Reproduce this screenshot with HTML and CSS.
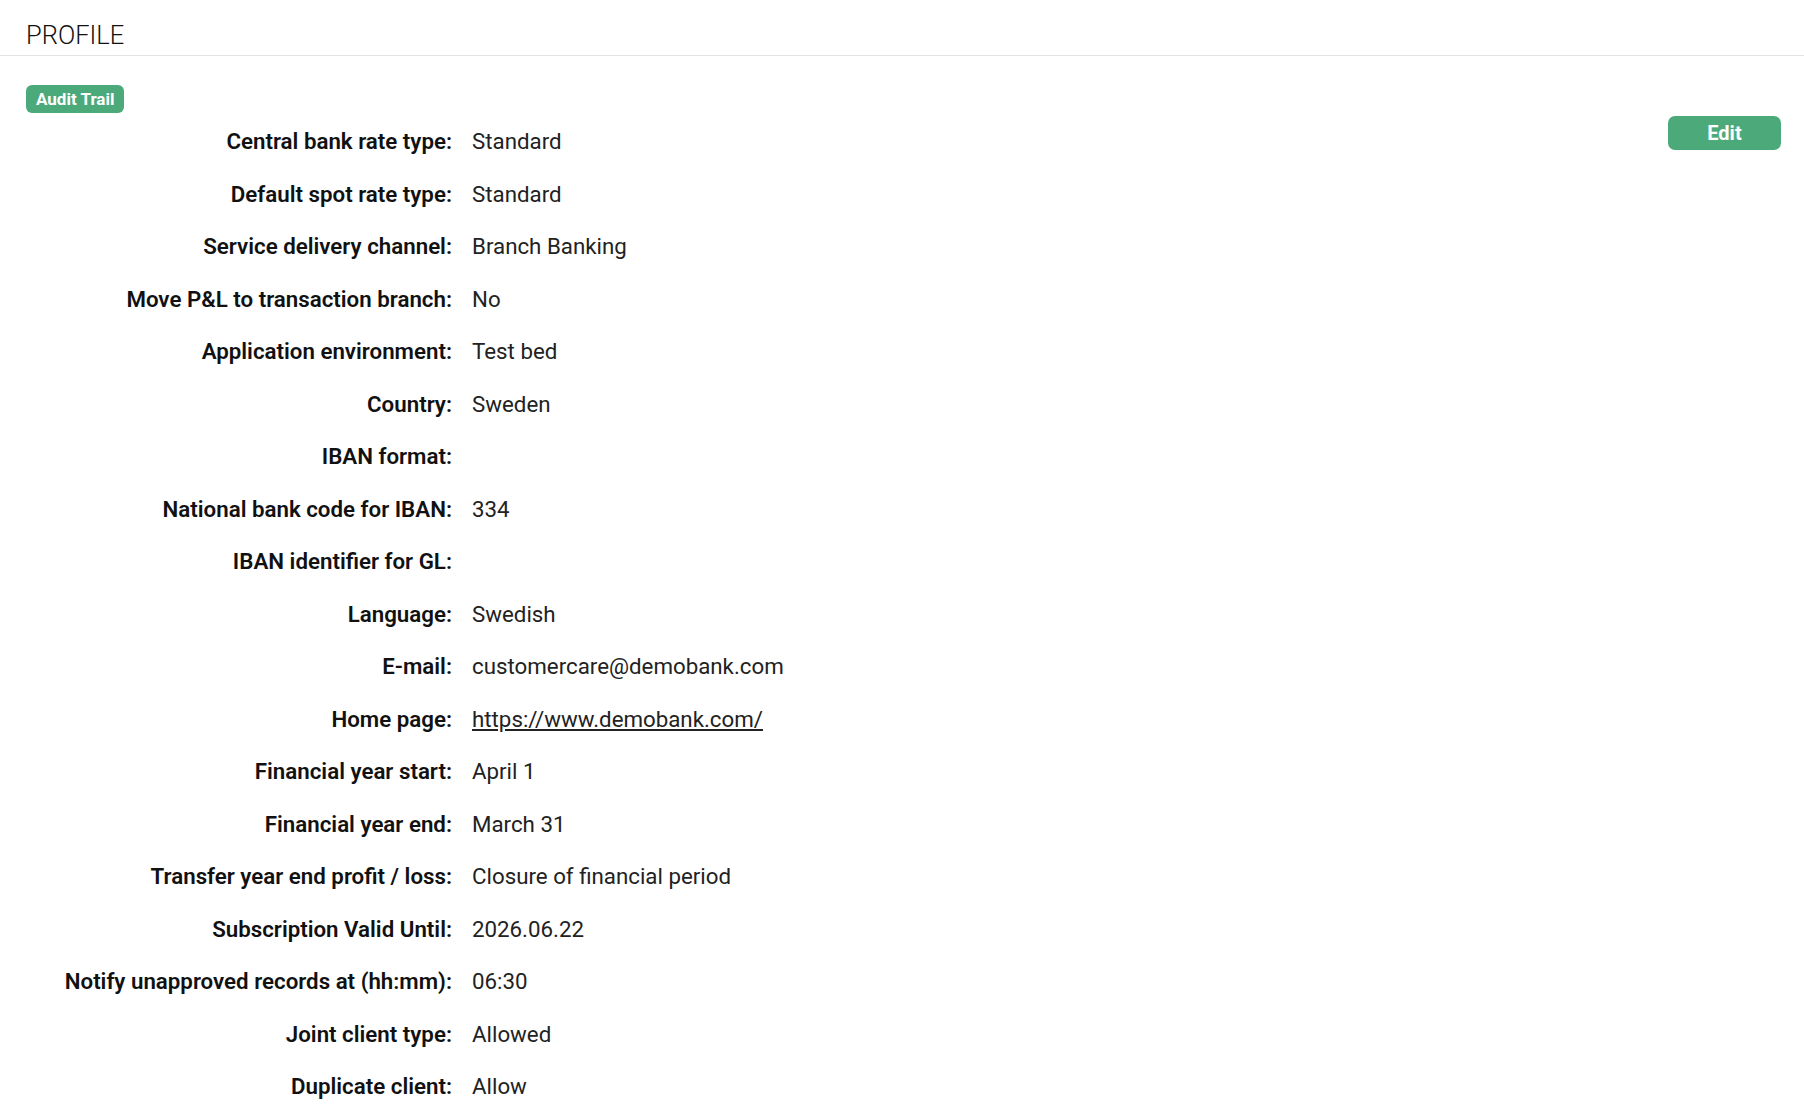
FILE: index.html
```html
<!DOCTYPE html>
<html lang="en">
<head>
    <meta charset="UTF-8">
    <title>Profile</title>
    <link rel="stylesheet" href="styles.css">
</head>
<body>
    <div class="page-header">
        <h1>PROFILE</h1>
    </div>

    <div class="panel">
        <div class="panel-tools">
            <button class="btn btn-small">Audit Trail</button>
        </div>

        <div class="panel-main">
            <dl class="fields">
                <dt>Central bank rate type:</dt><dd>Standard</dd>
                <dt>Default spot rate type:</dt><dd>Standard</dd>
                <dt>Service delivery channel:</dt><dd>Branch Banking</dd>
                <dt>Move P&amp;L to transaction branch:</dt><dd>No</dd>
                <dt>Application environment:</dt><dd>Test bed</dd>
                <dt>Country:</dt><dd>Sweden</dd>
                <dt>IBAN format:</dt><dd></dd>
                <dt>National bank code for IBAN:</dt><dd>334</dd>
                <dt>IBAN identifier for GL:</dt><dd></dd>
                <dt>Language:</dt><dd>Swedish</dd>
                <dt>E-mail:</dt><dd>customercare@demobank.com</dd>
                <dt>Home page:</dt><dd><a href="#">https://www.demobank.com/</a></dd>
                <dt>Financial year start:</dt><dd>April 1</dd>
                <dt>Financial year end:</dt><dd>March 31</dd>
                <dt>Transfer year end profit / loss:</dt><dd>Closure of financial period</dd>
                <dt>Subscription Valid Until:</dt><dd>2026.06.22</dd>
                <dt>Notify unapproved records at (hh:mm):</dt><dd>06:30</dd>
                <dt>Joint client type:</dt><dd>Allowed</dd>
                <dt>Duplicate client:</dt><dd>Allow</dd>
            </dl>

            <button class="btn btn-edit">Edit</button>
        </div>
    </div>
</body>
</html>
```

FILE: styles.css
```css
body {
    margin: 0;
    font-family: Roboto, "Noto Sans", sans-serif;
    color: #111;
    background: #fff;
}

.page-header {
    height: 56px;
    border-bottom: 1px solid #e2e2e2;
    padding-left: 26px;
    box-sizing: border-box;
}

.page-header h1 {
    margin: 0;
    padding-top: 20px;
    font-size: 25.5px;
    line-height: 30px;
    font-weight: 300;
    color: #111;
}

.panel {
    padding: 29px 23px 0 26px;
}

.panel-tools {
    height: 30px;
}

.btn {
    border: 0;
    background-color: #4caa7a;
    color: #fff;
    font-family: Roboto, "Noto Sans", sans-serif;
    font-weight: 700;
    cursor: pointer;
}

.btn-small {
    height: 28px;
    padding: 0 10px;
    font-size: 17px;
    border-radius: 6px;
}

.panel-main {
    display: flex;
    align-items: flex-start;
}

.btn-edit {
    margin-left: auto;
    margin-top: 1px;
    width: 113px;
    height: 34px;
    font-size: 20px;
    border-radius: 7px;
}

.fields {
    display: grid;
    grid-template-columns: 426px auto;
    column-gap: 20px;
    margin: 0;
    font-size: 22.3px;
    line-height: 52.5px;
}

.fields dt {
    text-align: right;
    font-weight: 600;
    color: #111;
}

.fields dd {
    margin: 0;
    color: #222;
}

.fields a {
    color: #222;
}
```
